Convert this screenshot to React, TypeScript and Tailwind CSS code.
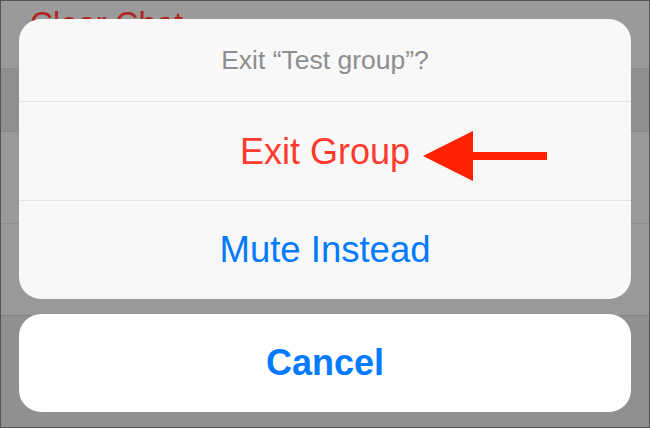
const font = { fontFamily: '"Liberation Sans", Arial, sans-serif' }

function BackgroundRows() {
  return (
    <div className="flex h-full flex-col">
      <div className="flex h-[67px] items-start bg-[#9a9a9a] pl-[29px] pt-[2px]">
        <span className="text-[32px] leading-[40px] text-[#b0261f]">Clear Chat</span>
      </div>
      <div className="h-px bg-[#8a8a8a]" />
      <div className="h-[62px] bg-[#8f8f8f]" />
      <div className="h-px bg-[#888888]" />
      <div className="h-[91px] bg-[#999999]" />
      <div className="h-px bg-[#8c8c8c]" />
      <div className="h-[91px] bg-[#999999]" />
      <div className="h-px bg-[#858585]" />
      <div className="flex-1 bg-[#909090]" />
    </div>
  )
}

export default function App() {
  return (
    <div
      style={font}
      className="relative h-[428px] w-[650px] overflow-hidden border border-[#555555] bg-[#999999]"
    >
      <BackgroundRows />

      <div className="absolute inset-0 flex flex-col gap-[15px] px-[18px] pt-[18px]">
        <div className="flex h-[280px] flex-col overflow-hidden rounded-[22px] bg-[#f8f8f8]">
          <div className="flex h-[83px] items-center justify-center border-b border-[#e3e3e3] pt-[1px] text-[26.5px] text-[#8e8e8e]">
            Exit “Test group”?
          </div>
          <div className="flex h-[99px] items-center justify-center border-b border-[#e3e3e3] pt-[2px] text-[36px] text-[#ff3b30]">
            Exit Group
          </div>
          <div className="flex flex-1 items-center justify-center pt-[1px] text-[36.5px] text-[#007aff]">
            Mute Instead
          </div>
        </div>

        <div className="flex h-[98px] items-center justify-center rounded-[22px] bg-white text-[36px] font-bold text-[#007aff]">
          Cancel
        </div>
      </div>

      <svg
        className="absolute left-[419px] top-[127px]"
        width="130"
        height="56"
        viewBox="0 0 130 56"
      >
        <path d="M3 28 L53 3 L53 24 L127 24 L127 32 L53 32 L53 53 Z" fill="#ff2200" />
      </svg>
    </div>
  )
}
